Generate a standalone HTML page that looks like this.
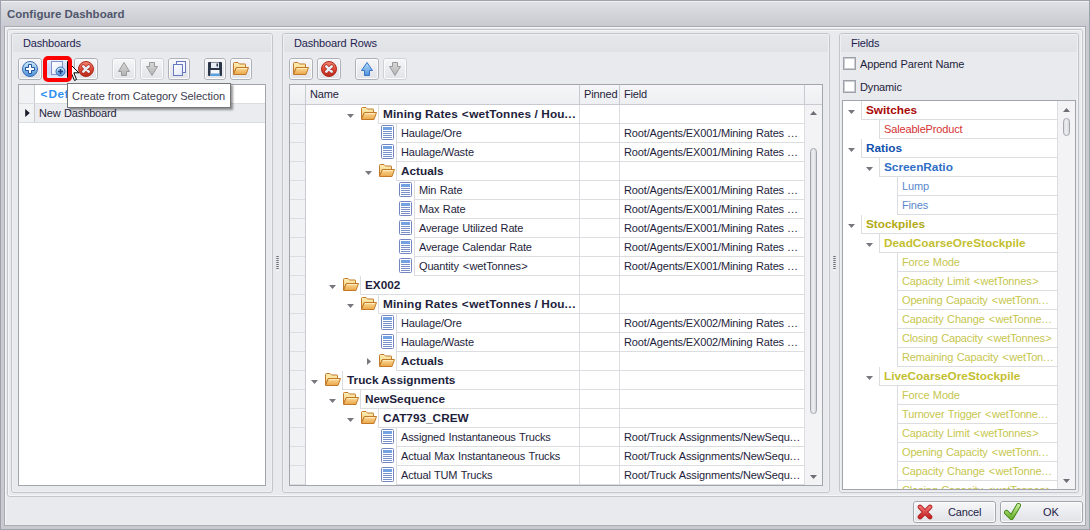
<!DOCTYPE html><html><head><meta charset="utf-8"><style>
*{box-sizing:border-box;margin:0;padding:0}
body{width:1090px;height:530px;position:relative;overflow:hidden;background:#e9eaee;font-family:"Liberation Sans",sans-serif;font-size:11px;color:#1e1e3c}
div,span{position:absolute}
.t{white-space:nowrap;line-height:19px;height:19px;letter-spacing:-0.15px;word-spacing:0.6px}
.b{font-weight:bold;font-size:11.8px;letter-spacing:0;word-spacing:0}
.btn{border:1px solid #afb1b8;border-radius:3px;background:linear-gradient(#f7f7f9,#e9eaee 60%,#e2e3e8)}
.btn:after{content:"";position:absolute;left:0;top:0;right:0;bottom:0;border:1px solid #fbfbfc;border-radius:2px}
.dis{border-color:#cfd1d6}
.t i{font-style:normal;position:static;padding:0 0.5px}
.t s{text-decoration:none;position:static;letter-spacing:0.5px}
</style></head><body><svg width="0" height="0" style="position:absolute"><defs>
<linearGradient id="gBlue" x1="0" y1="0" x2="0" y2="1"><stop offset="0" stop-color="#d4ecfb"/><stop offset="0.5" stop-color="#8cc0ea"/><stop offset="1" stop-color="#4a8ad4"/></linearGradient>
<linearGradient id="gRed" x1="0" y1="0" x2="0" y2="1"><stop offset="0" stop-color="#f08a78"/><stop offset="0.5" stop-color="#de4a38"/><stop offset="1" stop-color="#b82818"/></linearGradient>
<linearGradient id="gFold" x1="0" y1="0" x2="0" y2="1"><stop offset="0" stop-color="#fdf0b8"/><stop offset="1" stop-color="#f3c870"/></linearGradient>
<linearGradient id="gFold2" x1="0" y1="0" x2="0" y2="1"><stop offset="0" stop-color="#fbdc98"/><stop offset="1" stop-color="#eaa648"/></linearGradient>
<linearGradient id="gGray" x1="0" y1="0" x2="0" y2="1"><stop offset="0" stop-color="#d8d8d8"/><stop offset="1" stop-color="#b4b4b4"/></linearGradient>
<linearGradient id="gUp" x1="0" y1="0" x2="0" y2="1"><stop offset="0" stop-color="#b8e0fa"/><stop offset="1" stop-color="#4c90dc"/></linearGradient>
<linearGradient id="gPage" x1="0" y1="0" x2="1" y2="1"><stop offset="0" stop-color="#ffffff"/><stop offset="1" stop-color="#dfe6f6"/></linearGradient>
<linearGradient id="gBtn" x1="0" y1="0" x2="0" y2="1"><stop offset="0" stop-color="#f4f4f6"/><stop offset="1" stop-color="#e4e5e9"/></linearGradient>
<linearGradient id="gCheck" x1="0" y1="0" x2="0" y2="1"><stop offset="0" stop-color="#c8ec98"/><stop offset="1" stop-color="#6cb030"/></linearGradient>
<linearGradient id="gX" x1="0" y1="0" x2="0" y2="1"><stop offset="0" stop-color="#f07070"/><stop offset="1" stop-color="#c82828"/></linearGradient>
</defs></svg>
<div style="left:0px;top:0px;width:1090px;height:530px;background:#c9cad0;border:1px solid #9ea2ad"></div>
<div style="left:1px;top:1px;width:1088px;height:25px;background:linear-gradient(#e0e1e5,#d6d7dc 40%,#c9cad1)"></div>
<div style="left:1px;top:1px;width:1088px;height:1px;background:#f0f1f3"></div>
<span style="left:7px;top:5px;line-height:19px;font-weight:bold;font-size:11.5px;color:#4f566c;white-space:nowrap">Configure Dashboard</span>
<div style="left:4px;top:26px;width:1082px;height:500px;background:#e9eaee;border:1px solid #a9abb3"></div>
<div style="left:5px;top:27px;width:1080px;height:498px;border:1px solid #f4f5f7;border-right-color:#eceef0;border-bottom-color:#eceef0"></div>
<div style="left:7px;top:29px;width:1076px;height:468px;border:1px solid #c4c6cb;border-radius:3px"></div>
<div style="left:8px;top:30px;width:1074px;height:466px;border:1px solid #f4f5f7;border-radius:2px"></div>
<div style="left:11px;top:33px;width:262px;height:460px;border:1px solid #c3c5ca;border-radius:3px;background:#e9eaee"></div>
<div style="left:12px;top:34px;width:260px;height:18px;background:linear-gradient(#e6e7eb,#e1e2e6);border-radius:2px 2px 0 0"></div>
<div style="left:12px;top:34px;width:260px;height:458px;border:1px solid #eff0f3;border-radius:2px"></div>
<span class="t" style="left:23px;top:34px;color:#1e1e50;line-height:18px;height:18px">Dashboards</span>
<div style="left:282px;top:33px;width:548px;height:460px;border:1px solid #c3c5ca;border-radius:3px;background:#e9eaee"></div>
<div style="left:283px;top:34px;width:546px;height:18px;background:linear-gradient(#e6e7eb,#e1e2e6);border-radius:2px 2px 0 0"></div>
<div style="left:283px;top:34px;width:546px;height:458px;border:1px solid #eff0f3;border-radius:2px"></div>
<span class="t" style="left:294px;top:34px;color:#1e1e50;line-height:18px;height:18px">Dashboard Rows</span>
<div style="left:839px;top:33px;width:240px;height:460px;border:1px solid #c3c5ca;border-radius:3px;background:#e9eaee"></div>
<div style="left:840px;top:34px;width:238px;height:18px;background:linear-gradient(#e6e7eb,#e1e2e6);border-radius:2px 2px 0 0"></div>
<div style="left:840px;top:34px;width:238px;height:458px;border:1px solid #eff0f3;border-radius:2px"></div>
<span class="t" style="left:851px;top:34px;color:#1e1e50;line-height:18px;height:18px">Fields</span>
<div style="left:276px;top:256px;width:3px;height:1px;background:linear-gradient(90deg,#a4a6ae,#6a6c76 50%,#a4a6ae)"></div>
<div style="left:276px;top:258px;width:3px;height:1px;background:linear-gradient(90deg,#a4a6ae,#6a6c76 50%,#a4a6ae)"></div>
<div style="left:276px;top:260px;width:3px;height:1px;background:linear-gradient(90deg,#a4a6ae,#6a6c76 50%,#a4a6ae)"></div>
<div style="left:276px;top:262px;width:3px;height:1px;background:linear-gradient(90deg,#a4a6ae,#6a6c76 50%,#a4a6ae)"></div>
<div style="left:276px;top:264px;width:3px;height:1px;background:linear-gradient(90deg,#a4a6ae,#6a6c76 50%,#a4a6ae)"></div>
<div style="left:276px;top:266px;width:3px;height:1px;background:linear-gradient(90deg,#a4a6ae,#6a6c76 50%,#a4a6ae)"></div>
<div style="left:276px;top:268px;width:3px;height:1px;background:linear-gradient(90deg,#a4a6ae,#6a6c76 50%,#a4a6ae)"></div>
<div style="left:276px;top:270px;width:3px;height:1px;background:#f6f7f9"></div>
<div style="left:833px;top:256px;width:3px;height:1px;background:linear-gradient(90deg,#a4a6ae,#6a6c76 50%,#a4a6ae)"></div>
<div style="left:833px;top:258px;width:3px;height:1px;background:linear-gradient(90deg,#a4a6ae,#6a6c76 50%,#a4a6ae)"></div>
<div style="left:833px;top:260px;width:3px;height:1px;background:linear-gradient(90deg,#a4a6ae,#6a6c76 50%,#a4a6ae)"></div>
<div style="left:833px;top:262px;width:3px;height:1px;background:linear-gradient(90deg,#a4a6ae,#6a6c76 50%,#a4a6ae)"></div>
<div style="left:833px;top:264px;width:3px;height:1px;background:linear-gradient(90deg,#a4a6ae,#6a6c76 50%,#a4a6ae)"></div>
<div style="left:833px;top:266px;width:3px;height:1px;background:linear-gradient(90deg,#a4a6ae,#6a6c76 50%,#a4a6ae)"></div>
<div style="left:833px;top:268px;width:3px;height:1px;background:linear-gradient(90deg,#a4a6ae,#6a6c76 50%,#a4a6ae)"></div>
<div style="left:833px;top:270px;width:3px;height:1px;background:#f6f7f9"></div>
<div class="btn" style="left:18px;top:58px;width:24px;height:22px;"></div>
<svg style="position:absolute;left:22px;top:61px;" width="16" height="16" viewBox="0 0 16 16"><circle cx="8" cy="8" r="7.5" fill="url(#gBlue)" stroke="#3c6eb8"/><path d="M6.5 3.5h3v3h3v3h-3v3h-3v-3h-3v-3h3z" fill="#fff" stroke="#23559e"/></svg>
<div class="btn" style="left:74px;top:58px;width:24px;height:22px;"></div>
<svg style="position:absolute;left:78px;top:61px;" width="16" height="16" viewBox="0 0 16 16"><circle cx="8" cy="8" r="7.5" fill="url(#gRed)" stroke="#b0281a"/><path d="M5.3 5.3L10.7 10.7M10.7 5.3L5.3 10.7" stroke="#b02a1a" stroke-width="4" stroke-linecap="round"/><path d="M5.3 5.3L10.7 10.7M10.7 5.3L5.3 10.7" stroke="#e8eff8" stroke-width="2.6" stroke-linecap="round"/></svg>
<div class="btn dis" style="left:112px;top:58px;width:24px;height:22px;"></div>
<svg style="position:absolute;left:116px;top:61px;" width="16" height="16" viewBox="0 0 16 16"><path d="M8 1.5L13.5 10.5H10.5V14.5H5.5V10.5H2.5z" fill="url(#gGray)" stroke="#9a9a9a"/></svg>
<div class="btn dis" style="left:140px;top:58px;width:24px;height:22px;"></div>
<svg style="position:absolute;left:144px;top:61px;" width="16" height="16" viewBox="0 0 16 16"><path d="M8 14.5L13.5 5.5H10.5V1.5H5.5V5.5H2.5z" fill="url(#gGray)" stroke="#9a9a9a"/></svg>
<div class="btn" style="left:168px;top:58px;width:22px;height:22px;"></div>
<svg style="position:absolute;left:171px;top:60px;" width="16" height="16" viewBox="0 0 16 16"><rect x="5.5" y="1.5" width="9" height="11" fill="#f4f6fc" stroke="#6878c0"/><rect x="2.5" y="4.5" width="9" height="11" fill="url(#gPage)" stroke="#6878c0"/></svg>
<div class="btn" style="left:204px;top:58px;width:22px;height:22px;"></div>
<svg style="position:absolute;left:207px;top:61px;" width="16" height="16" viewBox="0 0 16 16"><rect x="1" y="1" width="14" height="14" rx="1" fill="#2a3548"/><rect x="4" y="1.5" width="8" height="5.5" fill="#e8edf5"/><rect x="9.5" y="2.5" width="1.5" height="3" fill="#2a3548"/><rect x="3.5" y="9" width="9" height="6" fill="#f4f6f9"/><rect x="3.5" y="12.5" width="9" height="2.5" fill="#5aa0e0"/></svg>
<div class="btn" style="left:230px;top:58px;width:22px;height:22px;"></div>
<svg style="position:absolute;left:233px;top:62px;" width="16" height="13" viewBox="0 0 16 13"><path d="M0.5 12V1.5Q0.5 0.5 1.5 0.5H5L6.5 2H12Q12.5 2 12.5 2.5V6H3z" fill="url(#gFold)" stroke="#c27a2a" stroke-linejoin="round"/><path d="M3.3 5.5H15.5L13 12.5H0.5z" fill="url(#gFold2)" stroke="#c27a2a" stroke-linejoin="round"/><path d="M4 6.6H14" stroke="#fff3cc" stroke-width="0.8"/></svg>
<div class="btn" style="left:289px;top:58px;width:24px;height:22px;"></div>
<svg style="position:absolute;left:293px;top:62px;" width="16" height="13" viewBox="0 0 16 13"><path d="M0.5 12V1.5Q0.5 0.5 1.5 0.5H5L6.5 2H12Q12.5 2 12.5 2.5V6H3z" fill="url(#gFold)" stroke="#c27a2a" stroke-linejoin="round"/><path d="M3.3 5.5H15.5L13 12.5H0.5z" fill="url(#gFold2)" stroke="#c27a2a" stroke-linejoin="round"/><path d="M4 6.6H14" stroke="#fff3cc" stroke-width="0.8"/></svg>
<div class="btn" style="left:317px;top:58px;width:24px;height:22px;"></div>
<svg style="position:absolute;left:321px;top:61px;" width="16" height="16" viewBox="0 0 16 16"><circle cx="8" cy="8" r="7.5" fill="url(#gRed)" stroke="#b0281a"/><path d="M5.3 5.3L10.7 10.7M10.7 5.3L5.3 10.7" stroke="#b02a1a" stroke-width="4" stroke-linecap="round"/><path d="M5.3 5.3L10.7 10.7M10.7 5.3L5.3 10.7" stroke="#e8eff8" stroke-width="2.6" stroke-linecap="round"/></svg>
<div class="btn" style="left:355px;top:58px;width:24px;height:22px;"></div>
<svg style="position:absolute;left:359px;top:61px;" width="16" height="16" viewBox="0 0 16 16"><path d="M8 1.5L13.5 9.5H10.5V14.5H5.5V9.5H2.5z" fill="url(#gUp)" stroke="#3a74c4"/></svg>
<div class="btn dis" style="left:383px;top:58px;width:24px;height:22px;"></div>
<svg style="position:absolute;left:387px;top:61px;" width="16" height="16" viewBox="0 0 16 16"><path d="M8 14.5L13.5 5.5H10.5V1.5H5.5V5.5H2.5z" fill="url(#gGray)" stroke="#9a9a9a"/></svg>
<div style="left:18px;top:84px;width:248px;height:402px;background:#fff;border:1px solid #a3a5ad"></div>
<div style="left:19px;top:85px;width:15px;height:37px;background:#f1f2f4"></div>
<div style="left:34px;top:85px;width:1px;height:37px;background:#c9cacf"></div>
<div style="left:19px;top:103px;width:246px;height:1px;background:#dcdde1"></div>
<div style="left:35px;top:104px;width:230px;height:18px;background:#ebecef"></div>
<div style="left:19px;top:122px;width:246px;height:1px;background:#dcdde1"></div>
<svg style="position:absolute;left:25px;top:109px;" width="5" height="8" viewBox="0 0 4 7"><path d="M0 0V7L4 3.5z" fill="#1a1a28"/></svg>
<span class="t b" style="left:40px;top:85px;color:#2f8ff0;letter-spacing:0.5px"><i>&lt;</i>Def</span>
<span class="t" style="left:39px;top:104px;color:#1e1e3c">New Dashboard</span>
<div style="left:289px;top:84px;width:534px;height:402px;background:#fff;border:1px solid #a3a5ad"></div>
<div style="left:290px;top:85px;width:532px;height:19px;background:linear-gradient(#f6f6f8,#eeeff2)"></div>
<div style="left:290px;top:104px;width:532px;height:1px;background:#c9cacf"></div>
<div style="left:305px;top:85px;width:1px;height:19px;background:#c9cacf"></div>
<div style="left:579px;top:85px;width:1px;height:19px;background:#c9cacf"></div>
<div style="left:619px;top:85px;width:1px;height:19px;background:#c9cacf"></div>
<div style="left:804px;top:85px;width:1px;height:19px;background:#c9cacf"></div>
<span class="t" style="left:310px;top:85px;">Name</span>
<span class="t" style="left:584px;top:85px;">Pinned</span>
<span class="t" style="left:624px;top:85px;">Field</span>
<div style="left:290px;top:105px;width:15px;height:380px;background:#f1f2f4"></div>
<div style="left:305px;top:105px;width:1px;height:380px;background:#c9cacf"></div>
<div style="left:805px;top:105px;width:17px;height:380px;background:#f3f3f5"></div>
<div style="left:804px;top:105px;width:1px;height:380px;background:#dcdde1"></div>
<div style="left:290px;top:123px;width:15px;height:1px;background:#dcdde1"></div>
<div style="left:378px;top:123px;width:426px;height:1px;background:#dcdde1"></div>
<div style="left:378px;top:105px;width:1px;height:19px;background:#dcdde1"></div>
<div style="left:579px;top:105px;width:1px;height:19px;background:#dcdde1"></div>
<div style="left:619px;top:105px;width:1px;height:19px;background:#dcdde1"></div>
<svg style="position:absolute;left:347px;top:114px;" width="7" height="4" viewBox="0 0 7 4"><path d="M0 0H7L3.5 4z" fill="#77787e"/></svg>
<svg style="position:absolute;left:361px;top:107px;" width="16" height="13" viewBox="0 0 16 13"><path d="M0.5 12V1.5Q0.5 0.5 1.5 0.5H5L6.5 2H12Q12.5 2 12.5 2.5V6H3z" fill="url(#gFold)" stroke="#c27a2a" stroke-linejoin="round"/><path d="M3.3 5.5H15.5L13 12.5H0.5z" fill="url(#gFold2)" stroke="#c27a2a" stroke-linejoin="round"/><path d="M4 6.6H14" stroke="#fff3cc" stroke-width="0.8"/></svg>
<span class="t b" style="left:383px;top:105px;letter-spacing:0.12px">Mining Rates <i>&lt;</i>wetTonnes / Hou<s>...</s></span>
<div style="left:290px;top:142px;width:15px;height:1px;background:#dcdde1"></div>
<div style="left:396px;top:142px;width:408px;height:1px;background:#dcdde1"></div>
<div style="left:396px;top:124px;width:1px;height:19px;background:#dcdde1"></div>
<div style="left:579px;top:124px;width:1px;height:19px;background:#dcdde1"></div>
<div style="left:619px;top:124px;width:1px;height:19px;background:#dcdde1"></div>
<svg style="position:absolute;left:381px;top:125px;" width="13" height="15" viewBox="0 0 13 15"><rect x="0.5" y="0.5" width="12" height="14" rx="1" fill="#fff" stroke="#7585c2"/><rect x="2" y="2" width="9" height="3" fill="#73a2e2"/><path d="M2 6.5h9M2 8.5h9M2 10.5h9M2 12.5h9" stroke="#7a90c8" stroke-width="1"/></svg>
<span class="t" style="left:401px;top:124px;">Haulage/Ore</span>
<span class="t" style="left:624px;top:124px;">Root/Agents/EX001/Mining Rates <s>...</s></span>
<div style="left:290px;top:161px;width:15px;height:1px;background:#dcdde1"></div>
<div style="left:396px;top:161px;width:408px;height:1px;background:#dcdde1"></div>
<div style="left:396px;top:143px;width:1px;height:19px;background:#dcdde1"></div>
<div style="left:579px;top:143px;width:1px;height:19px;background:#dcdde1"></div>
<div style="left:619px;top:143px;width:1px;height:19px;background:#dcdde1"></div>
<svg style="position:absolute;left:381px;top:144px;" width="13" height="15" viewBox="0 0 13 15"><rect x="0.5" y="0.5" width="12" height="14" rx="1" fill="#fff" stroke="#7585c2"/><rect x="2" y="2" width="9" height="3" fill="#73a2e2"/><path d="M2 6.5h9M2 8.5h9M2 10.5h9M2 12.5h9" stroke="#7a90c8" stroke-width="1"/></svg>
<span class="t" style="left:401px;top:143px;">Haulage/Waste</span>
<span class="t" style="left:624px;top:143px;">Root/Agents/EX001/Mining Rates <s>...</s></span>
<div style="left:290px;top:180px;width:15px;height:1px;background:#dcdde1"></div>
<div style="left:396px;top:180px;width:408px;height:1px;background:#dcdde1"></div>
<div style="left:396px;top:162px;width:1px;height:19px;background:#dcdde1"></div>
<div style="left:579px;top:162px;width:1px;height:19px;background:#dcdde1"></div>
<div style="left:619px;top:162px;width:1px;height:19px;background:#dcdde1"></div>
<svg style="position:absolute;left:365px;top:171px;" width="7" height="4" viewBox="0 0 7 4"><path d="M0 0H7L3.5 4z" fill="#77787e"/></svg>
<svg style="position:absolute;left:379px;top:164px;" width="16" height="13" viewBox="0 0 16 13"><path d="M0.5 12V1.5Q0.5 0.5 1.5 0.5H5L6.5 2H12Q12.5 2 12.5 2.5V6H3z" fill="url(#gFold)" stroke="#c27a2a" stroke-linejoin="round"/><path d="M3.3 5.5H15.5L13 12.5H0.5z" fill="url(#gFold2)" stroke="#c27a2a" stroke-linejoin="round"/><path d="M4 6.6H14" stroke="#fff3cc" stroke-width="0.8"/></svg>
<span class="t b" style="left:401px;top:162px;">Actuals</span>
<div style="left:290px;top:199px;width:15px;height:1px;background:#dcdde1"></div>
<div style="left:414px;top:199px;width:390px;height:1px;background:#dcdde1"></div>
<div style="left:414px;top:181px;width:1px;height:19px;background:#dcdde1"></div>
<div style="left:579px;top:181px;width:1px;height:19px;background:#dcdde1"></div>
<div style="left:619px;top:181px;width:1px;height:19px;background:#dcdde1"></div>
<svg style="position:absolute;left:399px;top:182px;" width="13" height="15" viewBox="0 0 13 15"><rect x="0.5" y="0.5" width="12" height="14" rx="1" fill="#fff" stroke="#7585c2"/><rect x="2" y="2" width="9" height="3" fill="#73a2e2"/><path d="M2 6.5h9M2 8.5h9M2 10.5h9M2 12.5h9" stroke="#7a90c8" stroke-width="1"/></svg>
<span class="t" style="left:419px;top:181px;">Min Rate</span>
<span class="t" style="left:624px;top:181px;">Root/Agents/EX001/Mining Rates <s>...</s></span>
<div style="left:290px;top:218px;width:15px;height:1px;background:#dcdde1"></div>
<div style="left:414px;top:218px;width:390px;height:1px;background:#dcdde1"></div>
<div style="left:414px;top:200px;width:1px;height:19px;background:#dcdde1"></div>
<div style="left:579px;top:200px;width:1px;height:19px;background:#dcdde1"></div>
<div style="left:619px;top:200px;width:1px;height:19px;background:#dcdde1"></div>
<svg style="position:absolute;left:399px;top:201px;" width="13" height="15" viewBox="0 0 13 15"><rect x="0.5" y="0.5" width="12" height="14" rx="1" fill="#fff" stroke="#7585c2"/><rect x="2" y="2" width="9" height="3" fill="#73a2e2"/><path d="M2 6.5h9M2 8.5h9M2 10.5h9M2 12.5h9" stroke="#7a90c8" stroke-width="1"/></svg>
<span class="t" style="left:419px;top:200px;">Max Rate</span>
<span class="t" style="left:624px;top:200px;">Root/Agents/EX001/Mining Rates <s>...</s></span>
<div style="left:290px;top:237px;width:15px;height:1px;background:#dcdde1"></div>
<div style="left:414px;top:237px;width:390px;height:1px;background:#dcdde1"></div>
<div style="left:414px;top:219px;width:1px;height:19px;background:#dcdde1"></div>
<div style="left:579px;top:219px;width:1px;height:19px;background:#dcdde1"></div>
<div style="left:619px;top:219px;width:1px;height:19px;background:#dcdde1"></div>
<svg style="position:absolute;left:399px;top:220px;" width="13" height="15" viewBox="0 0 13 15"><rect x="0.5" y="0.5" width="12" height="14" rx="1" fill="#fff" stroke="#7585c2"/><rect x="2" y="2" width="9" height="3" fill="#73a2e2"/><path d="M2 6.5h9M2 8.5h9M2 10.5h9M2 12.5h9" stroke="#7a90c8" stroke-width="1"/></svg>
<span class="t" style="left:419px;top:219px;">Average Utilized Rate</span>
<span class="t" style="left:624px;top:219px;">Root/Agents/EX001/Mining Rates <s>...</s></span>
<div style="left:290px;top:256px;width:15px;height:1px;background:#dcdde1"></div>
<div style="left:414px;top:256px;width:390px;height:1px;background:#dcdde1"></div>
<div style="left:414px;top:238px;width:1px;height:19px;background:#dcdde1"></div>
<div style="left:579px;top:238px;width:1px;height:19px;background:#dcdde1"></div>
<div style="left:619px;top:238px;width:1px;height:19px;background:#dcdde1"></div>
<svg style="position:absolute;left:399px;top:239px;" width="13" height="15" viewBox="0 0 13 15"><rect x="0.5" y="0.5" width="12" height="14" rx="1" fill="#fff" stroke="#7585c2"/><rect x="2" y="2" width="9" height="3" fill="#73a2e2"/><path d="M2 6.5h9M2 8.5h9M2 10.5h9M2 12.5h9" stroke="#7a90c8" stroke-width="1"/></svg>
<span class="t" style="left:419px;top:238px;">Average Calendar Rate</span>
<span class="t" style="left:624px;top:238px;">Root/Agents/EX001/Mining Rates <s>...</s></span>
<div style="left:290px;top:275px;width:15px;height:1px;background:#dcdde1"></div>
<div style="left:414px;top:275px;width:390px;height:1px;background:#dcdde1"></div>
<div style="left:414px;top:257px;width:1px;height:19px;background:#dcdde1"></div>
<div style="left:579px;top:257px;width:1px;height:19px;background:#dcdde1"></div>
<div style="left:619px;top:257px;width:1px;height:19px;background:#dcdde1"></div>
<svg style="position:absolute;left:399px;top:258px;" width="13" height="15" viewBox="0 0 13 15"><rect x="0.5" y="0.5" width="12" height="14" rx="1" fill="#fff" stroke="#7585c2"/><rect x="2" y="2" width="9" height="3" fill="#73a2e2"/><path d="M2 6.5h9M2 8.5h9M2 10.5h9M2 12.5h9" stroke="#7a90c8" stroke-width="1"/></svg>
<span class="t" style="left:419px;top:257px;">Quantity <i>&lt;</i>wetTonnes<i>&gt;</i></span>
<span class="t" style="left:624px;top:257px;">Root/Agents/EX001/Mining Rates <s>...</s></span>
<div style="left:290px;top:294px;width:15px;height:1px;background:#dcdde1"></div>
<div style="left:360px;top:294px;width:444px;height:1px;background:#dcdde1"></div>
<div style="left:360px;top:276px;width:1px;height:19px;background:#dcdde1"></div>
<div style="left:579px;top:276px;width:1px;height:19px;background:#dcdde1"></div>
<div style="left:619px;top:276px;width:1px;height:19px;background:#dcdde1"></div>
<svg style="position:absolute;left:329px;top:285px;" width="7" height="4" viewBox="0 0 7 4"><path d="M0 0H7L3.5 4z" fill="#77787e"/></svg>
<svg style="position:absolute;left:343px;top:278px;" width="16" height="13" viewBox="0 0 16 13"><path d="M0.5 12V1.5Q0.5 0.5 1.5 0.5H5L6.5 2H12Q12.5 2 12.5 2.5V6H3z" fill="url(#gFold)" stroke="#c27a2a" stroke-linejoin="round"/><path d="M3.3 5.5H15.5L13 12.5H0.5z" fill="url(#gFold2)" stroke="#c27a2a" stroke-linejoin="round"/><path d="M4 6.6H14" stroke="#fff3cc" stroke-width="0.8"/></svg>
<span class="t b" style="left:365px;top:276px;">EX002</span>
<div style="left:290px;top:313px;width:15px;height:1px;background:#dcdde1"></div>
<div style="left:378px;top:313px;width:426px;height:1px;background:#dcdde1"></div>
<div style="left:378px;top:295px;width:1px;height:19px;background:#dcdde1"></div>
<div style="left:579px;top:295px;width:1px;height:19px;background:#dcdde1"></div>
<div style="left:619px;top:295px;width:1px;height:19px;background:#dcdde1"></div>
<svg style="position:absolute;left:347px;top:304px;" width="7" height="4" viewBox="0 0 7 4"><path d="M0 0H7L3.5 4z" fill="#77787e"/></svg>
<svg style="position:absolute;left:361px;top:297px;" width="16" height="13" viewBox="0 0 16 13"><path d="M0.5 12V1.5Q0.5 0.5 1.5 0.5H5L6.5 2H12Q12.5 2 12.5 2.5V6H3z" fill="url(#gFold)" stroke="#c27a2a" stroke-linejoin="round"/><path d="M3.3 5.5H15.5L13 12.5H0.5z" fill="url(#gFold2)" stroke="#c27a2a" stroke-linejoin="round"/><path d="M4 6.6H14" stroke="#fff3cc" stroke-width="0.8"/></svg>
<span class="t b" style="left:383px;top:295px;letter-spacing:0.12px">Mining Rates <i>&lt;</i>wetTonnes / Hou<s>...</s></span>
<div style="left:290px;top:332px;width:15px;height:1px;background:#dcdde1"></div>
<div style="left:396px;top:332px;width:408px;height:1px;background:#dcdde1"></div>
<div style="left:396px;top:314px;width:1px;height:19px;background:#dcdde1"></div>
<div style="left:579px;top:314px;width:1px;height:19px;background:#dcdde1"></div>
<div style="left:619px;top:314px;width:1px;height:19px;background:#dcdde1"></div>
<svg style="position:absolute;left:381px;top:315px;" width="13" height="15" viewBox="0 0 13 15"><rect x="0.5" y="0.5" width="12" height="14" rx="1" fill="#fff" stroke="#7585c2"/><rect x="2" y="2" width="9" height="3" fill="#73a2e2"/><path d="M2 6.5h9M2 8.5h9M2 10.5h9M2 12.5h9" stroke="#7a90c8" stroke-width="1"/></svg>
<span class="t" style="left:401px;top:314px;">Haulage/Ore</span>
<span class="t" style="left:624px;top:314px;">Root/Agents/EX002/Mining Rates <s>...</s></span>
<div style="left:290px;top:351px;width:15px;height:1px;background:#dcdde1"></div>
<div style="left:396px;top:351px;width:408px;height:1px;background:#dcdde1"></div>
<div style="left:396px;top:333px;width:1px;height:19px;background:#dcdde1"></div>
<div style="left:579px;top:333px;width:1px;height:19px;background:#dcdde1"></div>
<div style="left:619px;top:333px;width:1px;height:19px;background:#dcdde1"></div>
<svg style="position:absolute;left:381px;top:334px;" width="13" height="15" viewBox="0 0 13 15"><rect x="0.5" y="0.5" width="12" height="14" rx="1" fill="#fff" stroke="#7585c2"/><rect x="2" y="2" width="9" height="3" fill="#73a2e2"/><path d="M2 6.5h9M2 8.5h9M2 10.5h9M2 12.5h9" stroke="#7a90c8" stroke-width="1"/></svg>
<span class="t" style="left:401px;top:333px;">Haulage/Waste</span>
<span class="t" style="left:624px;top:333px;">Root/Agents/EX002/Mining Rates <s>...</s></span>
<div style="left:290px;top:370px;width:15px;height:1px;background:#dcdde1"></div>
<div style="left:396px;top:370px;width:408px;height:1px;background:#dcdde1"></div>
<div style="left:396px;top:352px;width:1px;height:19px;background:#dcdde1"></div>
<div style="left:579px;top:352px;width:1px;height:19px;background:#dcdde1"></div>
<div style="left:619px;top:352px;width:1px;height:19px;background:#dcdde1"></div>
<svg style="position:absolute;left:367px;top:358px;" width="4" height="7" viewBox="0 0 4 7"><path d="M0 0V7L4 3.5z" fill="#77787e"/></svg>
<svg style="position:absolute;left:379px;top:354px;" width="16" height="13" viewBox="0 0 16 13"><path d="M0.5 12V1.5Q0.5 0.5 1.5 0.5H5L6.5 2H12Q12.5 2 12.5 2.5V6H3z" fill="url(#gFold)" stroke="#c27a2a" stroke-linejoin="round"/><path d="M3.3 5.5H15.5L13 12.5H0.5z" fill="url(#gFold2)" stroke="#c27a2a" stroke-linejoin="round"/><path d="M4 6.6H14" stroke="#fff3cc" stroke-width="0.8"/></svg>
<span class="t b" style="left:401px;top:352px;">Actuals</span>
<div style="left:290px;top:389px;width:15px;height:1px;background:#dcdde1"></div>
<div style="left:342px;top:389px;width:462px;height:1px;background:#dcdde1"></div>
<div style="left:342px;top:371px;width:1px;height:19px;background:#dcdde1"></div>
<div style="left:579px;top:371px;width:1px;height:19px;background:#dcdde1"></div>
<div style="left:619px;top:371px;width:1px;height:19px;background:#dcdde1"></div>
<svg style="position:absolute;left:311px;top:380px;" width="7" height="4" viewBox="0 0 7 4"><path d="M0 0H7L3.5 4z" fill="#77787e"/></svg>
<svg style="position:absolute;left:325px;top:373px;" width="16" height="13" viewBox="0 0 16 13"><path d="M0.5 12V1.5Q0.5 0.5 1.5 0.5H5L6.5 2H12Q12.5 2 12.5 2.5V6H3z" fill="url(#gFold)" stroke="#c27a2a" stroke-linejoin="round"/><path d="M3.3 5.5H15.5L13 12.5H0.5z" fill="url(#gFold2)" stroke="#c27a2a" stroke-linejoin="round"/><path d="M4 6.6H14" stroke="#fff3cc" stroke-width="0.8"/></svg>
<span class="t b" style="left:347px;top:371px;">Truck Assignments</span>
<div style="left:290px;top:408px;width:15px;height:1px;background:#dcdde1"></div>
<div style="left:360px;top:408px;width:444px;height:1px;background:#dcdde1"></div>
<div style="left:360px;top:390px;width:1px;height:19px;background:#dcdde1"></div>
<div style="left:579px;top:390px;width:1px;height:19px;background:#dcdde1"></div>
<div style="left:619px;top:390px;width:1px;height:19px;background:#dcdde1"></div>
<svg style="position:absolute;left:329px;top:399px;" width="7" height="4" viewBox="0 0 7 4"><path d="M0 0H7L3.5 4z" fill="#77787e"/></svg>
<svg style="position:absolute;left:343px;top:392px;" width="16" height="13" viewBox="0 0 16 13"><path d="M0.5 12V1.5Q0.5 0.5 1.5 0.5H5L6.5 2H12Q12.5 2 12.5 2.5V6H3z" fill="url(#gFold)" stroke="#c27a2a" stroke-linejoin="round"/><path d="M3.3 5.5H15.5L13 12.5H0.5z" fill="url(#gFold2)" stroke="#c27a2a" stroke-linejoin="round"/><path d="M4 6.6H14" stroke="#fff3cc" stroke-width="0.8"/></svg>
<span class="t b" style="left:365px;top:390px;">NewSequence</span>
<div style="left:290px;top:427px;width:15px;height:1px;background:#dcdde1"></div>
<div style="left:378px;top:427px;width:426px;height:1px;background:#dcdde1"></div>
<div style="left:378px;top:409px;width:1px;height:19px;background:#dcdde1"></div>
<div style="left:579px;top:409px;width:1px;height:19px;background:#dcdde1"></div>
<div style="left:619px;top:409px;width:1px;height:19px;background:#dcdde1"></div>
<svg style="position:absolute;left:347px;top:418px;" width="7" height="4" viewBox="0 0 7 4"><path d="M0 0H7L3.5 4z" fill="#77787e"/></svg>
<svg style="position:absolute;left:361px;top:411px;" width="16" height="13" viewBox="0 0 16 13"><path d="M0.5 12V1.5Q0.5 0.5 1.5 0.5H5L6.5 2H12Q12.5 2 12.5 2.5V6H3z" fill="url(#gFold)" stroke="#c27a2a" stroke-linejoin="round"/><path d="M3.3 5.5H15.5L13 12.5H0.5z" fill="url(#gFold2)" stroke="#c27a2a" stroke-linejoin="round"/><path d="M4 6.6H14" stroke="#fff3cc" stroke-width="0.8"/></svg>
<span class="t b" style="left:383px;top:409px;">CAT793_CREW</span>
<div style="left:290px;top:446px;width:15px;height:1px;background:#dcdde1"></div>
<div style="left:396px;top:446px;width:408px;height:1px;background:#dcdde1"></div>
<div style="left:396px;top:428px;width:1px;height:19px;background:#dcdde1"></div>
<div style="left:579px;top:428px;width:1px;height:19px;background:#dcdde1"></div>
<div style="left:619px;top:428px;width:1px;height:19px;background:#dcdde1"></div>
<svg style="position:absolute;left:381px;top:429px;" width="13" height="15" viewBox="0 0 13 15"><rect x="0.5" y="0.5" width="12" height="14" rx="1" fill="#fff" stroke="#7585c2"/><rect x="2" y="2" width="9" height="3" fill="#73a2e2"/><path d="M2 6.5h9M2 8.5h9M2 10.5h9M2 12.5h9" stroke="#7a90c8" stroke-width="1"/></svg>
<span class="t" style="left:401px;top:428px;">Assigned Instantaneous Trucks</span>
<span class="t" style="left:624px;top:428px;">Root/Truck Assignments/NewSequ<s>...</s></span>
<div style="left:290px;top:465px;width:15px;height:1px;background:#dcdde1"></div>
<div style="left:396px;top:465px;width:408px;height:1px;background:#dcdde1"></div>
<div style="left:396px;top:447px;width:1px;height:19px;background:#dcdde1"></div>
<div style="left:579px;top:447px;width:1px;height:19px;background:#dcdde1"></div>
<div style="left:619px;top:447px;width:1px;height:19px;background:#dcdde1"></div>
<svg style="position:absolute;left:381px;top:448px;" width="13" height="15" viewBox="0 0 13 15"><rect x="0.5" y="0.5" width="12" height="14" rx="1" fill="#fff" stroke="#7585c2"/><rect x="2" y="2" width="9" height="3" fill="#73a2e2"/><path d="M2 6.5h9M2 8.5h9M2 10.5h9M2 12.5h9" stroke="#7a90c8" stroke-width="1"/></svg>
<span class="t" style="left:401px;top:447px;">Actual Max Instantaneous Trucks</span>
<span class="t" style="left:624px;top:447px;">Root/Truck Assignments/NewSequ<s>...</s></span>
<div style="left:290px;top:484px;width:15px;height:1px;background:#dcdde1"></div>
<div style="left:396px;top:484px;width:408px;height:1px;background:#dcdde1"></div>
<div style="left:396px;top:466px;width:1px;height:19px;background:#dcdde1"></div>
<div style="left:579px;top:466px;width:1px;height:19px;background:#dcdde1"></div>
<div style="left:619px;top:466px;width:1px;height:19px;background:#dcdde1"></div>
<svg style="position:absolute;left:381px;top:467px;" width="13" height="15" viewBox="0 0 13 15"><rect x="0.5" y="0.5" width="12" height="14" rx="1" fill="#fff" stroke="#7585c2"/><rect x="2" y="2" width="9" height="3" fill="#73a2e2"/><path d="M2 6.5h9M2 8.5h9M2 10.5h9M2 12.5h9" stroke="#7a90c8" stroke-width="1"/></svg>
<span class="t" style="left:401px;top:466px;">Actual TUM Trucks</span>
<span class="t" style="left:624px;top:466px;">Root/Truck Assignments/NewSequ<s>...</s></span>
<svg style="position:absolute;left:810px;top:111px;" width="7" height="4" viewBox="0 0 7 4"><path d="M0 4H7L3.5 0z" fill="#6e6f76"/></svg>
<svg style="position:absolute;left:810px;top:475px;" width="7" height="4" viewBox="0 0 7 4"><path d="M0 0H7L3.5 4z" fill="#6e6f76"/></svg>
<div style="left:810px;top:148px;width:7px;height:266px;background:linear-gradient(90deg,#dcdde2,#eceef1 50%,#d4d5da);border:1px solid #a4a6ae;border-radius:4px"></div>
<div style="left:843px;top:57px;width:13px;height:13px;background:#fff;border:1px solid #9fa1a9"></div>
<div style="left:844px;top:58px;width:11px;height:11px;border:1px solid #caccd2"></div>
<span class="t" style="left:860px;top:55px;">Append Parent Name</span>
<div style="left:843px;top:80px;width:13px;height:13px;background:#fff;border:1px solid #9fa1a9"></div>
<div style="left:844px;top:81px;width:11px;height:11px;border:1px solid #caccd2"></div>
<span class="t" style="left:860px;top:78px;">Dynamic</span>
<div style="left:842px;top:100px;width:234px;height:390px;background:#fff;border:1px solid #a3a5ad"></div>
<div style="left:1058px;top:101px;width:17px;height:388px;background:#f3f3f5"></div>
<div style="left:1057px;top:101px;width:1px;height:388px;background:#dcdde1"></div>
<div style="left:843px;top:101px;width:232px;height:388px;overflow:hidden">
<div style="left:18px;top:18px;width:197px;height:1px;background:#dcdde1"></div>
<div style="left:18px;top:0px;width:1px;height:19px;background:#dcdde1"></div>
<svg style="position:absolute;left:5px;top:9px;" width="7" height="4" viewBox="0 0 7 4"><path d="M0 0H7L3.5 4z" fill="#77787e"/></svg>
<span class="t b" style="left:23px;top:0px;color:#a80808">Switches</span>
<div style="left:36px;top:37px;width:179px;height:1px;background:#dcdde1"></div>
<div style="left:36px;top:19px;width:1px;height:19px;background:#dcdde1"></div>
<span class="t" style="left:41px;top:19px;color:#d43434">SaleableProduct</span>
<div style="left:18px;top:56px;width:197px;height:1px;background:#dcdde1"></div>
<div style="left:18px;top:38px;width:1px;height:19px;background:#dcdde1"></div>
<svg style="position:absolute;left:5px;top:47px;" width="7" height="4" viewBox="0 0 7 4"><path d="M0 0H7L3.5 4z" fill="#77787e"/></svg>
<span class="t b" style="left:23px;top:38px;color:#1050ac">Ratios</span>
<div style="left:36px;top:75px;width:179px;height:1px;background:#dcdde1"></div>
<div style="left:36px;top:57px;width:1px;height:19px;background:#dcdde1"></div>
<svg style="position:absolute;left:23px;top:66px;" width="7" height="4" viewBox="0 0 7 4"><path d="M0 0H7L3.5 4z" fill="#77787e"/></svg>
<span class="t b" style="left:41px;top:57px;color:#2e6ec6">ScreenRatio</span>
<div style="left:54px;top:94px;width:161px;height:1px;background:#dcdde1"></div>
<div style="left:54px;top:76px;width:1px;height:19px;background:#dcdde1"></div>
<span class="t" style="left:59px;top:76px;color:#5a88cc">Lump</span>
<div style="left:54px;top:113px;width:161px;height:1px;background:#dcdde1"></div>
<div style="left:54px;top:95px;width:1px;height:19px;background:#dcdde1"></div>
<span class="t" style="left:59px;top:95px;color:#5a88cc">Fines</span>
<div style="left:18px;top:132px;width:197px;height:1px;background:#dcdde1"></div>
<div style="left:18px;top:114px;width:1px;height:19px;background:#dcdde1"></div>
<svg style="position:absolute;left:5px;top:123px;" width="7" height="4" viewBox="0 0 7 4"><path d="M0 0H7L3.5 4z" fill="#77787e"/></svg>
<span class="t b" style="left:23px;top:114px;color:#b2aa14">Stockpiles</span>
<div style="left:36px;top:151px;width:179px;height:1px;background:#dcdde1"></div>
<div style="left:36px;top:133px;width:1px;height:19px;background:#dcdde1"></div>
<svg style="position:absolute;left:23px;top:142px;" width="7" height="4" viewBox="0 0 7 4"><path d="M0 0H7L3.5 4z" fill="#77787e"/></svg>
<span class="t b" style="left:41px;top:133px;color:#c4bf30">DeadCoarseOreStockpile</span>
<div style="left:54px;top:170px;width:161px;height:1px;background:#dcdde1"></div>
<div style="left:54px;top:152px;width:1px;height:19px;background:#dcdde1"></div>
<span class="t" style="left:59px;top:152px;color:#c6c64e">Force Mode</span>
<div style="left:54px;top:189px;width:161px;height:1px;background:#dcdde1"></div>
<div style="left:54px;top:171px;width:1px;height:19px;background:#dcdde1"></div>
<span class="t" style="left:59px;top:171px;color:#c6c64e">Capacity Limit <i>&lt;</i>wetTonnes<i>&gt;</i></span>
<div style="left:54px;top:208px;width:161px;height:1px;background:#dcdde1"></div>
<div style="left:54px;top:190px;width:1px;height:19px;background:#dcdde1"></div>
<span class="t" style="left:59px;top:190px;color:#c6c64e">Opening Capacity <i>&lt;</i>wetTonn<s>...</s></span>
<div style="left:54px;top:227px;width:161px;height:1px;background:#dcdde1"></div>
<div style="left:54px;top:209px;width:1px;height:19px;background:#dcdde1"></div>
<span class="t" style="left:59px;top:209px;color:#c6c64e">Capacity Change <i>&lt;</i>wetTonne<s>...</s></span>
<div style="left:54px;top:246px;width:161px;height:1px;background:#dcdde1"></div>
<div style="left:54px;top:228px;width:1px;height:19px;background:#dcdde1"></div>
<span class="t" style="left:59px;top:228px;color:#c6c64e">Closing Capacity <i>&lt;</i>wetTonnes<i>&gt;</i></span>
<div style="left:54px;top:265px;width:161px;height:1px;background:#dcdde1"></div>
<div style="left:54px;top:247px;width:1px;height:19px;background:#dcdde1"></div>
<span class="t" style="left:59px;top:247px;color:#c6c64e">Remaining Capacity <i>&lt;</i>wetTon<s>...</s></span>
<div style="left:36px;top:284px;width:179px;height:1px;background:#dcdde1"></div>
<div style="left:36px;top:266px;width:1px;height:19px;background:#dcdde1"></div>
<svg style="position:absolute;left:23px;top:275px;" width="7" height="4" viewBox="0 0 7 4"><path d="M0 0H7L3.5 4z" fill="#77787e"/></svg>
<span class="t b" style="left:41px;top:266px;color:#c4bf30">LiveCoarseOreStockpile</span>
<div style="left:54px;top:303px;width:161px;height:1px;background:#dcdde1"></div>
<div style="left:54px;top:285px;width:1px;height:19px;background:#dcdde1"></div>
<span class="t" style="left:59px;top:285px;color:#c6c64e">Force Mode</span>
<div style="left:54px;top:322px;width:161px;height:1px;background:#dcdde1"></div>
<div style="left:54px;top:304px;width:1px;height:19px;background:#dcdde1"></div>
<span class="t" style="left:59px;top:304px;color:#c6c64e">Turnover Trigger <i>&lt;</i>wetTonne<s>...</s></span>
<div style="left:54px;top:341px;width:161px;height:1px;background:#dcdde1"></div>
<div style="left:54px;top:323px;width:1px;height:19px;background:#dcdde1"></div>
<span class="t" style="left:59px;top:323px;color:#c6c64e">Capacity Limit <i>&lt;</i>wetTonnes<i>&gt;</i></span>
<div style="left:54px;top:360px;width:161px;height:1px;background:#dcdde1"></div>
<div style="left:54px;top:342px;width:1px;height:19px;background:#dcdde1"></div>
<span class="t" style="left:59px;top:342px;color:#c6c64e">Opening Capacity <i>&lt;</i>wetTonn<s>...</s></span>
<div style="left:54px;top:379px;width:161px;height:1px;background:#dcdde1"></div>
<div style="left:54px;top:361px;width:1px;height:19px;background:#dcdde1"></div>
<span class="t" style="left:59px;top:361px;color:#c6c64e">Capacity Change <i>&lt;</i>wetTonne<s>...</s></span>
<div style="left:54px;top:398px;width:161px;height:1px;background:#dcdde1"></div>
<div style="left:54px;top:380px;width:1px;height:19px;background:#dcdde1"></div>
<span class="t" style="left:59px;top:380px;color:#c6c64e">Closing Capacity <i>&lt;</i>wetTonnes<i>&gt;</i></span>
</div>
<svg style="position:absolute;left:1063px;top:108px;" width="7" height="4" viewBox="0 0 7 4"><path d="M0 4H7L3.5 0z" fill="#6e6f76"/></svg>
<svg style="position:absolute;left:1063px;top:479px;" width="7" height="4" viewBox="0 0 7 4"><path d="M0 0H7L3.5 4z" fill="#6e6f76"/></svg>
<div style="left:1063px;top:118px;width:7px;height:18px;background:linear-gradient(90deg,#dcdde2,#eceef1 50%,#d4d5da);border:1px solid #a4a6ae;border-radius:4px"></div>
<div class="btn" style="left:913px;top:501px;width:83px;height:22px;border-color:#a4a6ae"></div>
<span class="t" style="left:948px;top:503px;color:#1c1c48">Cancel</span>
<div class="btn" style="left:1000px;top:501px;width:83px;height:22px;border-color:#a4a6ae"></div>
<span class="t" style="left:1043px;top:503px;color:#1c1c48">OK</span>
<svg style="position:absolute;left:917px;top:504px;" width="16" height="16" viewBox="0 0 16 16"><path d="M3 3L13 13M13 3L3 13" stroke="#b01c1c" stroke-width="4.6" stroke-linecap="round"/><path d="M3 3L13 13M13 3L3 13" stroke="url(#gX)" stroke-width="3" stroke-linecap="round"/></svg>
<svg style="position:absolute;left:1004px;top:503px;" width="17" height="17" viewBox="0 0 17 17"><path d="M2.5 9.5L7.5 14.5L14.5 2.5" stroke="#3a8410" stroke-width="5" fill="none" stroke-linejoin="round" stroke-linecap="round"/><path d="M2.5 9.5L7.5 14.5L14.5 2.5" stroke="url(#gCheck)" stroke-width="3.2" fill="none" stroke-linejoin="round" stroke-linecap="round"/></svg>
<div style="left:47px;top:60px;width:20px;height:18px;background:linear-gradient(#e6f2fc,#d4dcf6 30%,#d0d8f4 70%,#e2eefa)"></div>
<svg style="position:absolute;left:47px;top:60px;" width="20" height="18" viewBox="0 0 20 18"><rect x="4.5" y="1.5" width="11" height="13" fill="url(#gPage)" stroke="#8392cc"/><circle cx="13.5" cy="11.5" r="4.5" fill="url(#gBlue)" stroke="#3c6eb8"/><path d="M13.5 9v5M11 11.5h5" stroke="#1c3f80" stroke-width="1.6"/></svg>
<svg style="position:absolute;left:67px;top:61px;" width="13" height="21" viewBox="0 0 13 21"><path d="M0.5 0.5V16.5L4.5 12.5L7.5 19.5L9.5 18.5L6.8 11.8H11.8z" fill="#fff" stroke="#000" stroke-linejoin="miter"/></svg>
<div style="left:43px;top:56px;width:29px;height:26px;border:4px solid #ff0000;border-radius:5px"></div>
<div style="left:67px;top:83px;width:164px;height:25px;background:#fff;border:1px solid #767676;box-shadow:2px 2px 2px rgba(0,0,0,0.4)"></div>
<span class="t" style="left:72px;top:87px;color:#3c3c50;line-height:19px;letter-spacing:-0.03px;word-spacing:0">Create from Category Selection</span></body></html>
